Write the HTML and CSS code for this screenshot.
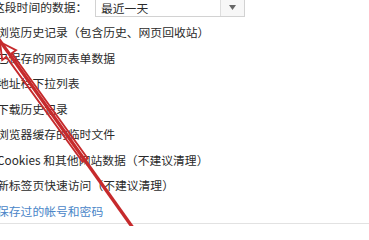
FILE: index.html
```html
<!DOCTYPE html>
<html lang="zh-CN">
<head>
<meta charset="utf-8">
<title>清除浏览数据</title>
<link rel="stylesheet" href="styles.css">
</head>
<body>
<div class="page">
  <div class="range-row">
    <span class="label">这段时间的数据：</span>
    <div class="select">
      <span class="value">最近一天</span>
      <span class="btn"><svg width="7" height="5" viewBox="0 0 7 5"><path d="M0 0H7L3.5 5Z" fill="#666"/></svg></span>
    </div>
  </div>
  <ul class="items">
    <li>浏览历史记录（包含历史、网页回收站）</li>
    <li>已保存的网页表单数据</li>
    <li>地址栏下拉列表</li>
    <li>下载历史记录</li>
    <li>浏览器缓存的临时文件</li>
    <li>Cookies 和其他网站数据（不建议清理）</li>
    <li>新标签页快速访问（不建议清理）</li>
    <li class="link">保存过的帐号和密码</li>
  </ul>
  <div class="rule"></div>
  <svg class="annot" width="369" height="226" viewBox="0 0 369 226">
    <line x1="-2" y1="38" x2="133" y2="228" stroke="#c62a2c" stroke-width="3.4"/>
    <polygon points="0,42 16,50.2 11.8,53.3 87.5,158.3 82.5,161.7 6.3,56.9 2.2,60" fill="none" stroke="#c62a2c" stroke-width="1.9" stroke-linejoin="miter"/>
  </svg>
</div>
</body>
</html>
```
FILE: styles.css
```css
html, body {
  margin: 0;
  padding: 0;
  background: #ffffff;
}
.page {
  position: relative;
  width: 369px;
  height: 226px;
  overflow: hidden;
  font-family: "Noto Sans CJK SC", "Noto Sans", sans-serif;
  font-size: 11.8px;
  color: #2a2a2a;
}
.range-row {
  display: flex;
  align-items: center;
  height: 22px;
  margin-top: -5px;
  margin-left: -7px;
}
.label {
  width: 102px;
  line-height: 22px;
  padding-top: 2px;
}
.select {
  display: flex;
  width: 148px;
  height: 20px;
  border: 1px solid #d2d2d2;
  background: #fff;
}
.value {
  flex: 1;
  padding-left: 5px;
  padding-top: 2px;
  line-height: 20px;
}
.btn {
  width: 24px;
  border-left: 1px solid #dedede;
  background: #f7f7f7;
  display: flex;
  align-items: center;
  justify-content: center;
  padding-top: 3px;
  box-sizing: border-box;
}
.items {
  list-style: none;
  margin: 2.2px 0 0 -3px;
  padding: 0;
}
.items li {
  height: 25.5px;
  line-height: 25.5px;
  white-space: nowrap;
}
.items .link {
  color: #4a86c8;
}
.rule {
  height: 1px;
  background: #e2e2e2;
}
.annot {
  position: absolute;
  left: 0;
  top: 0;
  pointer-events: none;
}
```
